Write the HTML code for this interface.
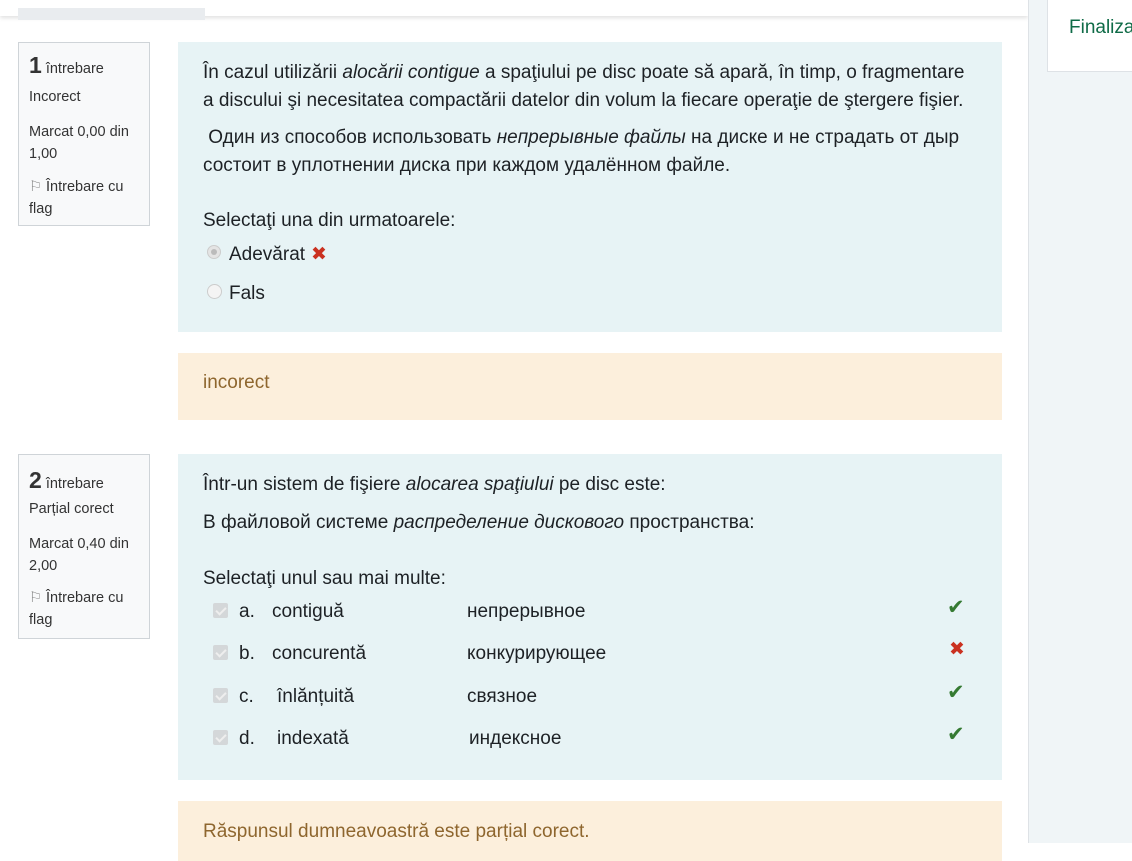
<!DOCTYPE html>
<html><head><meta charset="utf-8"><style>
body{margin:0;width:1132px;height:843px;overflow:hidden;background:#fff;font-family:"Liberation Sans","DejaVu Sans",sans-serif;color:#1d2125;position:relative}
.a{position:absolute;white-space:nowrap}
.info{position:absolute;left:18px;width:130px;border:1px solid #cfd4d8;background:#f8f9fa;font-size:14.5px;color:#333}
.info div{position:absolute;left:10px;white-space:nowrap}
.q{position:absolute;left:178px;width:824px;background:#e7f3f5}
.t{position:absolute;font-size:19px;white-space:nowrap;margin-top:2px}
.fb{position:absolute;left:178px;width:824px;background:#fcefdc;color:#8e662e;font-size:19px}
.cb{position:absolute;width:15px;height:15px;background:#d4d7d9;border-radius:2px}
.cb:after{content:"";position:absolute;left:5px;top:2px;width:4px;height:8px;border:solid #eee;border-width:0 2px 2px 0;transform:rotate(45deg)}
.ok{color:#357a32;font-size:21px;position:absolute;left:947px;font-weight:bold}
.bad{color:#ca3120;font-size:19px;position:absolute;font-weight:bold}
</style></head><body>
<div class="a" style="left:0;top:0;width:1028px;height:16px;background:#fff;box-shadow:0 2px 4px rgba(0,0,0,.12)"></div>
<div class="a" style="left:18px;top:8px;width:187px;height:12px;background:#e9ecef"></div>
<div class="a" style="left:1028px;top:0;width:104px;height:843px;background:#f0f5f7;border-left:1px solid #dee2e6"></div>
<div class="a" style="left:1047px;top:0;width:85px;height:71px;background:#fff;border-left:1px solid #dee2e6;border-bottom:1px solid #dee2e6"></div>
<div class="a" style="left:1069px;top:17px;font-size:19px;color:#0f6b47">Finaliza</div>

<div class="info" style="top:42px;height:182px">
<div style="top:9px"><b style="font-size:23px">1</b> întrebare</div>
<div style="top:46px">Incorect</div>
<div style="top:78px;line-height:22px">Marcat 0,00 din<br>1,00</div>
<div style="top:133px;line-height:22px"><span style="color:#888">⚐</span> Întrebare cu<br>flag</div>
</div>
<div class="q" style="top:42px;height:290px"></div>
<div class="t" style="left:203px;top:60px">În cazul utilizării <i>alocării contigue</i> a spaţiului pe disc poate să apară, în timp, o fragmentare</div>
<div class="t" style="left:203px;top:88px">a discului şi necesitatea compactării datelor din volum la fiecare operaţie de ştergere fişier.</div>
<div class="t" style="left:203px;top:125px">&nbsp;Один из способов использовать <i>непрерывные файлы</i> на диске и не страдать от дыр</div>
<div class="t" style="left:203px;top:153px">состоит в уплотнении диска при каждом удалённом файле.</div>
<div class="t" style="left:203px;top:208px">Selectaţi una din urmatoarele:</div>
<div class="a" style="left:207px;top:245px;width:14px;height:14px;border-radius:50%;border:1px solid #ccc;background:#e4e4e4;box-sizing:border-box"><div style="margin:3px;width:6px;height:6px;border-radius:50%;background:#bbb"></div></div>
<div class="t" style="left:229px;top:242px">Adevărat</div>
<div class="bad" style="left:311px;top:243px">✖</div>
<div class="a" style="left:207px;top:284px;width:15px;height:15px;border-radius:50%;border:1px solid #ccc;background:#f4f4f4;box-sizing:border-box"></div>
<div class="t" style="left:229px;top:281px">Fals</div>
<div class="fb" style="top:353px;height:67px"><span class="a" style="left:25px;top:19px">incorect</span></div>

<div class="info" style="top:454px;height:183px">
<div style="top:12px"><b style="font-size:23px">2</b> întrebare</div>
<div style="top:46px">Parțial corect</div>
<div style="top:78px;line-height:22px">Marcat 0,40 din<br>2,00</div>
<div style="top:132px;line-height:22px"><span style="color:#888">⚐</span> Întrebare cu<br>flag</div>
</div>
<div class="q" style="top:454px;height:326px"></div>
<div class="t" style="left:203px;top:472px">Într-un sistem de fişiere <i>alocarea spaţiului</i> pe disc este:</div>
<div class="t" style="left:203px;top:510px">В файловой системе <i>распределение дискового</i> пространства:</div>
<div class="t" style="left:203px;top:566px">Selectaţi unul sau mai multe:</div>
<div class="cb" style="left:213px;top:603px"></div><div class="t" style="left:239px;top:599px">a.</div><div class="t" style="left:272px;top:599px">contiguă</div><div class="t" style="left:467px;top:599px">непрерывное</div><div class="ok" style="top:595px">✔</div>
<div class="cb" style="left:213px;top:645px"></div><div class="t" style="left:239px;top:641px">b.</div><div class="t" style="left:272px;top:641px">concurentă</div><div class="t" style="left:467px;top:641px">конкурирующее</div><div class="bad" style="left:949px;top:638px">✖</div>
<div class="cb" style="left:213px;top:688px"></div><div class="t" style="left:239px;top:684px">c.</div><div class="t" style="left:277px;top:684px">înlănțuită</div><div class="t" style="left:467px;top:684px">связное</div><div class="ok" style="top:680px">✔</div>
<div class="cb" style="left:213px;top:730px"></div><div class="t" style="left:239px;top:726px">d.</div><div class="t" style="left:277px;top:726px">indexată</div><div class="t" style="left:469px;top:726px">индексное</div><div class="ok" style="top:722px">✔</div>
<div class="fb" style="top:801px;height:60px"><span class="a" style="left:25px;top:20px">Răspunsul dumneavoastră este parțial corect.</span></div>
</body></html>
